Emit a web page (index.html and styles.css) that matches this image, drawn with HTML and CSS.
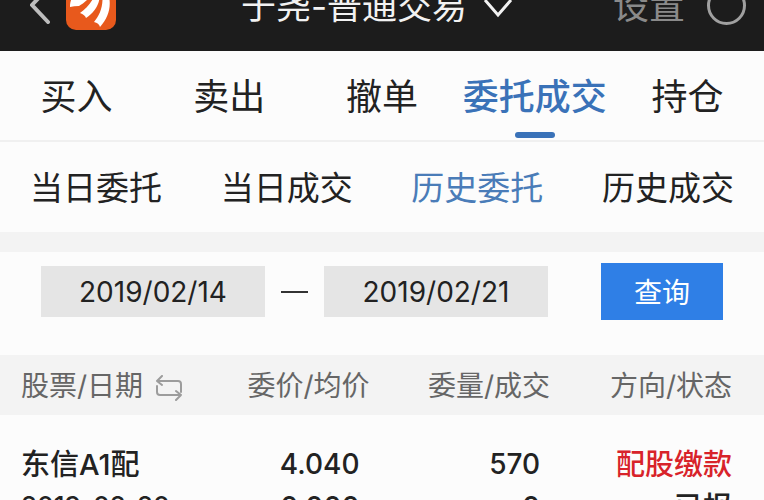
FILE: index.html
```
<!DOCTYPE html>
<html lang="zh-CN">
<head>
    <meta charset="UTF-8">
    <meta name="viewport" content="width=device-width, initial-scale=1.0">
    <title>普通交易</title>
    <link rel="stylesheet" href="styles.css">
</head>
<body>
    <header class="topbar">
        <div class="topbar-side">
            <a class="back" href="#" aria-label="返回">
                <svg width="20" height="38" viewBox="0 0 20 38"><path d="M18 2 2 19 18 36" fill="none" stroke="#bdbdbd" stroke-width="4" stroke-linecap="round"/></svg>
            </a>
            <a class="logo" href="#" aria-label="首页">
                <svg width="50" height="50" viewBox="0 0 50 50">
                    <rect width="50" height="50" rx="10" fill="#e8591c"/>
                    <path d="M4 25C5 14 13 7 27 5L29 11C24 18 18 23 13 26Q8 26 4 27Z" fill="#fff"/>
                    <path d="M14 33C21 28 27 21 30 12L34 13C34 24 29 32 20 38Q19 35 14 33Z" fill="#fff"/>
                    <path d="M28 42C34 35 38 25 36 12L42 13C46 25 43 37 34 47Q33 43 28 42Z" fill="#fff"/>
                </svg>
            </a>
        </div>
        <button class="account" type="button">
            于尧-普通交易
            <svg width="30" height="20" viewBox="0 0 30 20"><path d="M2 2 15 17 28 2" fill="none" stroke="#f2f2f2" stroke-width="3"/></svg>
        </button>
        <div class="topbar-side topbar-right">
            <a class="settings" href="#">设置</a>
            <a class="refresh" href="#" aria-label="刷新"></a>
        </div>
    </header>

    <nav class="tabs">
        <a href="#">买入</a>
        <a href="#">卖出</a>
        <a href="#">撤单</a>
        <a class="active" href="#">委托成交</a>
        <a href="#">持仓</a>
    </nav>

    <nav class="subtabs">
        <a href="#">当日委托</a>
        <a href="#">当日成交</a>
        <a class="active" href="#">历史委托</a>
        <a href="#">历史成交</a>
    </nav>

    <form class="filter">
        <input type="text" value="2019/02/14" aria-label="开始日期">
        <span class="dash"></span>
        <input type="text" value="2019/02/21" aria-label="结束日期">
        <button type="button">查询</button>
    </form>

    <table class="orders">
        <thead>
            <tr>
                <th>
                    股票/日期
                    <svg width="28" height="26" viewBox="0 0 28 26" fill="none" stroke="#9c9c9c" stroke-width="2" stroke-linecap="round" stroke-linejoin="round">
                        <path d="M7 1 2 6 7 10M2 6H23Q26 6 26 9V17"/>
                        <path d="M21 16 26 20 21 25M26 20H5Q2 20 2 17V11"/>
                    </svg>
                </th>
                <th>委价/均价</th>
                <th>委量/成交</th>
                <th>方向/状态</th>
            </tr>
        </thead>
        <tbody>
            <tr>
                <td>东信A1配<span class="date">2019-02-20</span></td>
                <td class="num">4.040<br>0.000</td>
                <td class="num">570<br>0</td>
                <td><span class="buy">配股缴款</span><br>已报</td>
            </tr>
        </tbody>
    </table>
</body>
</html>
```

FILE: styles.css
```
* {
    box-sizing: border-box;
}
body {
    margin: 0;
    height: 100vh;
    overflow: hidden;
    background-color: #fcfcfc;
    color: #222;
    font-family: Inter, "Noto Sans CJK SC", sans-serif;
    font-size: 28px;
}
a {
    color: inherit;
    text-decoration: none;
}
svg {
    display: block;
}
button, input {
    font: inherit;
    border: none;
    border-radius: 0;
}

/* the top bar is scrolled partly out of view */
.topbar {
    display: flex;
    align-items: center;
    height: 92px;
    margin-top: -41px;
    padding: 0 18px 0 30px;
    background-color: #1c1c1c;
    font-size: 36px;
}
.topbar-side {
    display: flex;
    flex: 1;
    align-items: center;
    gap: 16px;
}
.topbar-right {
    justify-content: flex-end;
    gap: 22px;
}
.account {
    display: flex;
    align-items: center;
    gap: 16px;
    margin-right: 22px;
    padding: 0 0 4px;
    background: none;
    color: #f2f2f2;
    font-size: 35px;
}
.account svg {
    margin-top: 10px;
}
.settings {
    padding-bottom: 4px;
    color: #8a8a8a;
}
.refresh {
    width: 39px;
    height: 39px;
    border: 3px solid #a0a0a0;
    border-radius: 50%;
}

.tabs {
    display: grid;
    grid-template-columns: repeat(5, 1fr);
    height: 91px;
    border-bottom: 2px solid #f0f0f0;
    font-size: 36px;
    line-height: 93px;
    text-align: center;
}
.tabs .active {
    position: relative;
    color: #3a72b8;
    font-weight: 500;
}
.tabs .active::after {
    content: "";
    position: absolute;
    left: 50%;
    bottom: 6px;
    width: 40px;
    height: 6px;
    margin-left: -20px;
    border-radius: 3px;
    background-color: #3a72b8;
}

.subtabs {
    display: flex;
    justify-content: space-between;
    height: 110px;
    padding: 0 30px;
    border-bottom: 20px solid #f3f3f3;
    font-size: 33px;
    line-height: 92px;
}
.subtabs .active {
    color: #4a7cb8;
}

.filter {
    display: flex;
    align-items: center;
    padding: 11px 41px 35px;
}
.filter input {
    flex: 1;
    min-width: 0;
    height: 51px;
    padding: 0;
    background-color: #e5e5e5;
    color: #222;
    text-align: center;
}
.dash {
    width: 27px;
    height: 2px;
    margin: 0 16px;
    background-color: #333;
}
.filter button {
    width: 122px;
    height: 57px;
    margin-left: 53px;
    padding: 0 0 2px;
    background-color: #2f7fe6;
    color: #fff;
}

.orders {
    width: 100%;
    table-layout: fixed;
    border-collapse: collapse;
    font-size: 29px;
    text-align: right;
}
.orders th {
    height: 60px;
    padding: 0 0 2px;
    background-color: #f3f3f3;
    color: #666;
    font-size: 28px;
    font-weight: 400;
    white-space: nowrap;
}
.orders th svg {
    display: inline-block;
    margin-left: 4px;
    vertical-align: middle;
}
.orders td {
    padding: 28px 0 0;
    font-weight: 500;
    line-height: 43px;
    vertical-align: top;
}
.orders .num {
    padding-right: 10px;
    font-size: 28px;
}
.orders th:first-child, .orders td:first-child {
    width: 189px;
    padding-left: 21px;
    text-align: left;
}
.orders th:last-child, .orders td:last-child {
    width: 28%;
    padding-right: 32px;
}
.date {
    display: block;
    font-size: 26px;
    line-height: 40px;
}
.buy {
    color: #d8232a;
}
```
